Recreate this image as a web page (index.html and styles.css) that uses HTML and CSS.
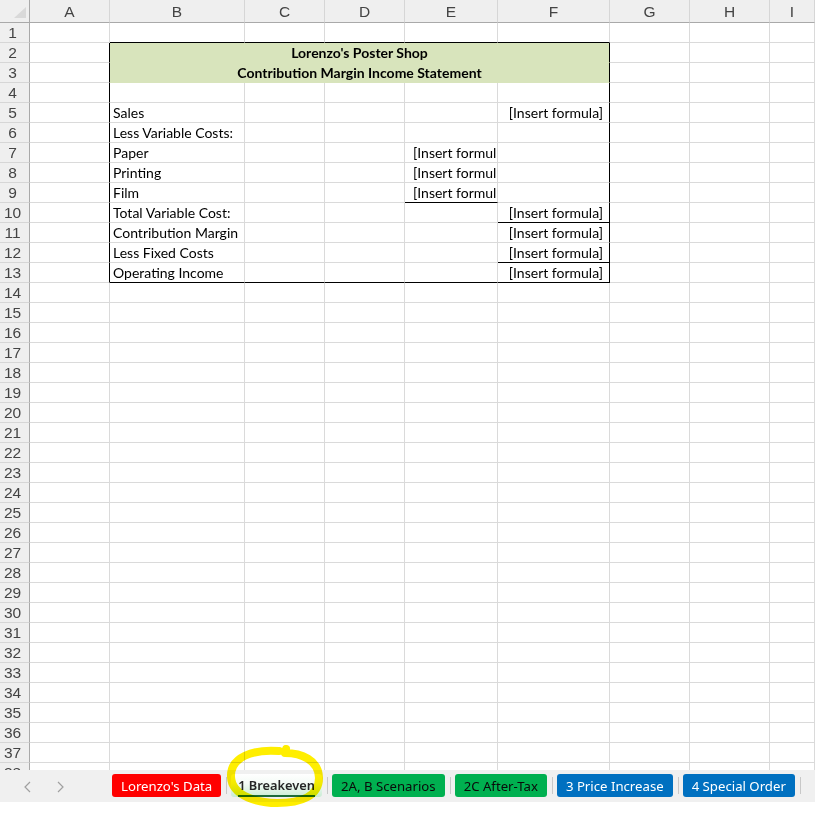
FILE: index.html
```html
<!DOCTYPE html>
<html>
<head>
<meta charset="utf-8">
<title>Lorenzo's Poster Shop</title>
<link rel="stylesheet" href="styles.css">
</head>
<body>
<div class="sheet">
  <div class="ch corner"><svg class="tri" width="30" height="23" viewBox="0 0 30 23"><polygon points="26,7 26,18 14,18" fill="#d9d9d9"/></svg></div><div class="ch">A</div><div class="ch">B</div><div class="ch">C</div><div class="ch">D</div><div class="ch">E</div><div class="ch">F</div><div class="ch">G</div><div class="ch">H</div><div class="ch">I</div>

  <div class="rh">1</div><div></div><div class="bb"></div><div class="bb"></div><div class="bb"></div><div class="bb"></div><div class="bb"></div><div></div><div></div><div></div>
  <div class="rh">2</div><div class="br"></div><div class="title">Lorenzo's Poster Shop</div><div></div><div></div><div></div>
  <div class="rh">3</div><div class="br"></div><div class="title">Contribution Margin Income Statement</div><div></div><div></div><div></div>
  <div class="rh">4</div><div class="br"></div><div></div><div></div><div></div><div></div><div class="br"></div><div></div><div></div><div></div>
  <div class="rh">5</div><div class="br"></div><div>Sales</div><div></div><div></div><div></div><div class="br num">[Insert formula]</div><div></div><div></div><div></div>
  <div class="rh">6</div><div class="br"></div><div>Less Variable Costs:</div><div></div><div></div><div></div><div class="br"></div><div></div><div></div><div></div>
  <div class="rh">7</div><div class="br"></div><div>Paper</div><div></div><div></div><div class="ecell">[Insert formula]</div><div class="br"></div><div></div><div></div><div></div>
  <div class="rh">8</div><div class="br"></div><div>Printing</div><div></div><div></div><div class="ecell">[Insert formula]</div><div class="br"></div><div></div><div></div><div></div>
  <div class="rh">9</div><div class="br"></div><div>Film</div><div></div><div></div><div class="ecell bb">[Insert formula]</div><div class="br"></div><div></div><div></div><div></div>
  <div class="rh">10</div><div class="br"></div><div>Total Variable Cost:</div><div></div><div></div><div></div><div class="br bb num">[Insert formula]</div><div></div><div></div><div></div>
  <div class="rh">11</div><div class="br"></div><div>Contribution Margin</div><div></div><div></div><div></div><div class="br num">[Insert formula]</div><div></div><div></div><div></div>
  <div class="rh">12</div><div class="br"></div><div>Less Fixed Costs</div><div></div><div></div><div></div><div class="br bb num">[Insert formula]</div><div></div><div></div><div></div>
  <div class="rh">13</div><div class="br"></div><div class="bb">Operating Income</div><div class="bb"></div><div class="bb"></div><div class="bb"></div><div class="br bb num">[Insert formula]</div><div></div><div></div><div></div>
  <div class="rh">14</div><div></div><div></div><div></div><div></div><div></div><div></div><div></div><div></div><div></div>
  <div class="rh">15</div><div></div><div></div><div></div><div></div><div></div><div></div><div></div><div></div><div></div>
  <div class="rh">16</div><div></div><div></div><div></div><div></div><div></div><div></div><div></div><div></div><div></div>
  <div class="rh">17</div><div></div><div></div><div></div><div></div><div></div><div></div><div></div><div></div><div></div>
  <div class="rh">18</div><div></div><div></div><div></div><div></div><div></div><div></div><div></div><div></div><div></div>
  <div class="rh">19</div><div></div><div></div><div></div><div></div><div></div><div></div><div></div><div></div><div></div>
  <div class="rh">20</div><div></div><div></div><div></div><div></div><div></div><div></div><div></div><div></div><div></div>
  <div class="rh">21</div><div></div><div></div><div></div><div></div><div></div><div></div><div></div><div></div><div></div>
  <div class="rh">22</div><div></div><div></div><div></div><div></div><div></div><div></div><div></div><div></div><div></div>
  <div class="rh">23</div><div></div><div></div><div></div><div></div><div></div><div></div><div></div><div></div><div></div>
  <div class="rh">24</div><div></div><div></div><div></div><div></div><div></div><div></div><div></div><div></div><div></div>
  <div class="rh">25</div><div></div><div></div><div></div><div></div><div></div><div></div><div></div><div></div><div></div>
  <div class="rh">26</div><div></div><div></div><div></div><div></div><div></div><div></div><div></div><div></div><div></div>
  <div class="rh">27</div><div></div><div></div><div></div><div></div><div></div><div></div><div></div><div></div><div></div>
  <div class="rh">28</div><div></div><div></div><div></div><div></div><div></div><div></div><div></div><div></div><div></div>
  <div class="rh">29</div><div></div><div></div><div></div><div></div><div></div><div></div><div></div><div></div><div></div>
  <div class="rh">30</div><div></div><div></div><div></div><div></div><div></div><div></div><div></div><div></div><div></div>
  <div class="rh">31</div><div></div><div></div><div></div><div></div><div></div><div></div><div></div><div></div><div></div>
  <div class="rh">32</div><div></div><div></div><div></div><div></div><div></div><div></div><div></div><div></div><div></div>
  <div class="rh">33</div><div></div><div></div><div></div><div></div><div></div><div></div><div></div><div></div><div></div>
  <div class="rh">34</div><div></div><div></div><div></div><div></div><div></div><div></div><div></div><div></div><div></div>
  <div class="rh">35</div><div></div><div></div><div></div><div></div><div></div><div></div><div></div><div></div><div></div>
  <div class="rh">36</div><div></div><div></div><div></div><div></div><div></div><div></div><div></div><div></div><div></div>
  <div class="rh">37</div><div></div><div></div><div></div><div></div><div></div><div></div><div></div><div></div><div></div>
  <div class="rh">38</div><div></div><div></div><div></div><div></div><div></div><div></div><div></div><div></div><div></div>
</div>

<div class="tabbar">
  <div class="nav">
    <svg class="arrow" width="10" height="14" viewBox="0 0 10 14"><polyline points="7,2 2,7 7,12" fill="none" stroke="#a0a0a0" stroke-width="1.2"/></svg>
    <svg class="arrow" width="10" height="14" viewBox="0 0 10 14"><polyline points="3,2 8,7 3,12" fill="none" stroke="#a0a0a0" stroke-width="1.2"/></svg>
  </div>
  <div class="tabs">
    <div class="tab red">Lorenzo's Data</div>
    <div class="sep"></div>
    <div class="tab active"><span class="label">1 Breakeven</span></div>
    <div class="sep"></div>
    <div class="tab green">2A, B Scenarios</div>
    <div class="sep"></div>
    <div class="tab green">2C After-Tax</div>
    <div class="sep"></div>
    <div class="tab blue">3 Price Increase</div>
    <div class="sep"></div>
    <div class="tab blue">4 Special Order</div>
    <div class="sep"></div>
  </div>
</div>

<svg class="highlight" width="120" height="75" viewBox="0 0 120 75">
  <path d="M64 11 C 38 9, 15 17, 16 37 C 17 57, 45 63, 62 63 C 86 63, 104 56, 104 38 C 104 20, 86 13, 70 13 L 71 9" fill="none" stroke="#ffee00" stroke-width="8" stroke-linecap="round" stroke-linejoin="round"/>
</svg>
</body>
</html>
```
FILE: styles.css
```css
* { box-sizing: border-box; margin: 0; padding: 0; }
html, body { background: #ffffff; }
body {
  margin: 0;
  width: 815px;
  height: 820px;
  overflow: hidden;
  position: relative;
  font-family: "Lato", "Liberation Sans", sans-serif;
}

.sheet {
  display: grid;
  grid-template-columns: 30px 80px 135px 80px 80px 93px 112px 80px 80px 1fr;
  grid-template-rows: 23px;
  grid-auto-rows: 20px;
  height: 770px;
  overflow: hidden;
}

.sheet > div {
  border-right: 1px solid #dadada;
  border-bottom: 1px solid #dadada;
  white-space: nowrap;
  font-size: 14px;
  line-height: 19px;
  color: #000;
  padding-left: 3px;
}

.sheet > .ch {
  background: #efefef;
  border-right-color: #d6d6d6;
  border-bottom-color: #a9a9a9;
  font-family: "Liberation Sans", Arial, sans-serif;
  font-size: 15.5px;
  color: #444;
  text-align: center;
  line-height: 22px;
  padding: 1px 0 0 0;
}

.sheet > .corner {
  border-right-color: #a9a9a9;
  padding: 0;
}

.tri { display: block; }

.sheet > .rh {
  background: #efefef;
  border-right-color: #a9a9a9;
  border-bottom-color: #d6d6d6;
  font-family: "Liberation Sans", Arial, sans-serif;
  font-size: 15.5px;
  color: #444;
  text-align: center;
  line-height: 19px;
  padding: 0 4px 0 0;
}

.sheet > .br { border-right-color: #000; }
.sheet > .bb { border-bottom-color: #000; }

.sheet > .title {
  grid-column: span 5;
  background: #d8e4bc;
  border-right-color: #000;
  border-bottom-color: #d8e4bc;
  text-align: center;
  font-weight: bold;
  padding-left: 0;
}

.sheet > .num {
  text-align: right;
  padding-right: 6px;
}

.sheet > .ecell {
  overflow: hidden;
  padding-left: 8px;
}

.tabbar {
  display: flex;
  height: 32px;
  background: #f0f0f0;
}

.nav {
  width: 112px;
  display: flex;
  align-items: center;
  padding-left: 23px;
  gap: 22px;
  padding-top: 1px;
}

.arrow { display: block; }

.tabs {
  display: flex;
  align-items: flex-start;
  padding-top: 4px;
}

.tab {
  height: 23px;
  border-radius: 3px;
  padding: 0 9px;
  font-family: "Noto Sans", "Open Sans", sans-serif;
  font-size: 13.2px;
  line-height: 24px;
  white-space: nowrap;
}

.red { background: #ff0000; color: #ffffff; }
.green { background: #00b050; color: #0a0a0a; }
.blue { background: #0070c0; color: #ffffff; }

.active {
  background: linear-gradient(#ffffff 0%, #f4fbf6 40%, #c9ecd4 100%);
  color: #262626;
  padding: 0 7px;
  line-height: 22px;
}

.active .label {
  display: inline-block;
  line-height: 19px;
  border-bottom: 2px solid #1b6b3a;
  font-weight: 600;
  font-size: 12.8px;
}

.sep {
  width: 1px;
  height: 17px;
  background: #c8c8c8;
  margin: 3px 4px 0 5px;
}

.highlight {
  position: absolute;
  left: 215px;
  top: 740px;
  mix-blend-mode: multiply;
}
```
